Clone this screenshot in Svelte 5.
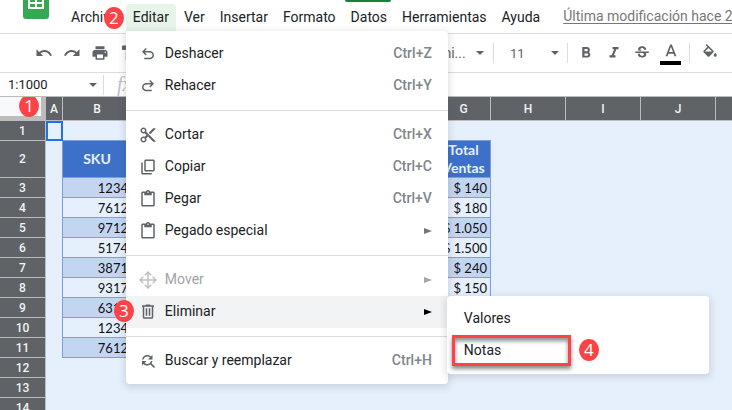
<script lang="ts">
	type MenuEntry = {
		label: string;
		icon: string;
		keys?: string;
		submenu?: boolean;
		disabled?: boolean;
		open?: boolean;
	};

	const menus = ["Archivo", "Editar", "Ver", "Insertar", "Formato", "Datos", "Herramientas", "Ayuda"];

	const groups: MenuEntry[][] = [
		[
			{ label: "Deshacer", icon: "back", keys: "Ctrl+Z" },
			{ label: "Rehacer", icon: "forward", keys: "Ctrl+Y" },
		],
		[
			{ label: "Cortar", icon: "cut", keys: "Ctrl+X" },
			{ label: "Copiar", icon: "copy", keys: "Ctrl+C" },
			{ label: "Pegar", icon: "paste", keys: "Ctrl+V" },
			{ label: "Pegado especial", icon: "paste", submenu: true },
		],
		[
			{ label: "Mover", icon: "move", submenu: true, disabled: true },
			{ label: "Eliminar", icon: "trash", submenu: true, open: true },
		],
		[{ label: "Buscar y reemplazar", icon: "replace", keys: "Ctrl+H" }],
	];

	const columns = ["A", "B", "C", "D", "E", "F", "G", "H", "I", "J", "K"];

	const sales = [
		["1234", "$ 140"],
		["7612", "$ 180"],
		["9712", "$ 1.050"],
		["5174", "$ 1.500"],
		["3871", "$ 240"],
		["9317", "$ 150"],
		["6312", "$ 180"],
		["1234", "$ 140"],
		["7612", "$ 180"],
	];

	// rows 1 to 14, sales start at row 3
	const rows = Array.from({ length: 14 }, (_, i) => i + 1);

	function cell(row: number, col: string) {
		if (row === 2) return { B: "SKU", G: "Total Ventas" }[col] ?? "";
		const sale = sales[row - 3];
		if (!sale) return "";
		return { B: sale[0], G: sale[1] }[col] ?? "";
	}

	function in_table(col: string) {
		return col >= "B" && col <= "G";
	}

	const paths: Record<string, string> = {
		undo: "M12.5 8c-2.65 0-5.05.99-6.9 2.6L2 7v9h9l-3.62-3.62c1.39-1.16 3.16-1.88 5.12-1.88 3.54 0 6.55 2.31 7.6 5.5l2.37-.78C21.08 11.03 17.15 8 12.5 8z",
		redo: "M18.4 10.6C16.55 8.99 14.15 8 11.5 8c-4.65 0-8.58 3.03-9.96 7.22L3.9 16c1.05-3.19 4.05-5.5 7.6-5.5 1.95 0 3.73.72 5.12 1.88L13 16h9V7l-3.6 3.6z",
		print: "M19 8H5c-1.66 0-3 1.34-3 3v6h4v4h12v-4h4v-6c0-1.66-1.34-3-3-3zm-3 11H8v-5h8v5zm3-7c-.55 0-1-.45-1-1s.45-1 1-1 1 .45 1 1-.45 1-1 1zm-1-9H6v4h12V3z",
		paint: "M18 4V3c0-.55-.45-1-1-1H5c-.55 0-1 .45-1 1v4c0 .55.45 1 1 1h12c.55 0 1-.45 1-1V6h1v4H9v11c0 .55.45 1 1 1h2c.55 0 1-.45 1-1v-9h8V4h-3z",
		bold: "M15.6 10.79c.97-.67 1.65-1.77 1.65-2.79 0-2.26-1.75-4-4-4H7v14h7.04c2.09 0 3.71-1.7 3.71-3.79 0-1.52-.86-2.82-2.15-3.42zM10 6.5h3c.83 0 1.5.67 1.5 1.5s-.67 1.5-1.5 1.5h-3v-3zm3.5 9H10v-3h3.5c.83 0 1.5.67 1.5 1.5s-.67 1.5-1.5 1.5z",
		italic: "M10 4v3h2.21l-3.42 8H6v3h8v-3h-2.21l3.42-8H18V4z",
		strike: "M7.24 8.75c-.26-.48-.39-1.03-.39-1.67 0-.61.13-1.16.4-1.67.26-.5.63-.93 1.11-1.29.48-.35 1.05-.63 1.7-.83.66-.19 1.39-.29 2.18-.29.81 0 1.54.11 2.21.34.66.22 1.23.54 1.69.94.47.4.83.88 1.08 1.43s.38 1.15.38 1.81h-3.01c0-.31-.05-.59-.15-.85-.09-.27-.24-.49-.44-.68-.2-.19-.45-.33-.75-.44-.3-.1-.66-.16-1.06-.16-.39 0-.74.04-1.03.13s-.53.21-.72.36c-.19.16-.34.34-.44.55-.1.21-.15.43-.15.66 0 .48.25.88.74 1.21.38.25.77.48 1.41.7H7.39c-.05-.08-.11-.17-.15-.25zM21 12v-2H3v2h9.62c.18.07.4.14.55.2.37.17.66.34.87.51s.35.36.43.57c.07.2.11.43.11.69 0 .23-.05.45-.14.66-.09.2-.23.38-.42.53-.19.15-.42.26-.71.35-.29.08-.63.13-1.01.13-.43 0-.83-.04-1.18-.13s-.66-.23-.91-.42c-.25-.19-.45-.44-.59-.75s-.25-.76-.25-1.21H6.4c0 .55.08 1.13.24 1.58s.37.85.65 1.21c.28.35.6.66.98.92.37.26.78.48 1.22.65.44.17.9.3 1.38.39.48.08.96.13 1.44.13.8 0 1.53-.09 2.18-.28s1.21-.45 1.67-.79c.46-.34.82-.77 1.07-1.27s.38-1.07.38-1.71c0-.6-.1-1.14-.31-1.61-.05-.11-.11-.23-.17-.33H21V12z",
		color: "M11 3L5.500 17h2.250l1.120-3h6.250l1.120 3h2.250L13 3h-2zm-1.380 9L12 5.670 14.380 12H9.620z",
		fill: "M16.56 8.94L7.62 0 6.21 1.41l2.38 2.38-5.15 5.15c-.59.59-.59 1.54 0 2.12l5.5 5.5c.29.29.68.44 1.06.44s.77-.15 1.06-.44l5.5-5.5c.59-.58.59-1.53 0-2.12zM5.21 10L10 5.21 14.79 10H5.21zM19 11.5s-2 2.17-2 3.5c0 1.1.9 2 2 2s2-.9 2-2c0-1.33-2-3.5-2-3.5z",
		back: "M7 19v-2h7.1c1.05 0 1.96-.33 2.73-1s1.17-1.5 1.17-2.5-.39-1.83-1.17-2.5S15.15 10 14.1 10H7.8l2.6 2.6L9 14 4 9l5-5 1.4 1.4L7.8 8h6.3c1.62 0 3 .53 4.16 1.58S20 11.93 20 13.5s-.58 2.9-1.74 3.95S15.72 19 14.1 19H7z",
		forward: "M17 19v-2H9.9c-1.05 0-1.96-.33-2.73-1S6 14.5 6 13.5s.39-1.83 1.17-2.5S8.85 10 9.9 10h6.3l-2.6 2.6L15 14l5-5-5-5-1.4 1.4L16.2 8H9.9c-1.62 0-3 .53-4.16 1.58S4 11.93 4 13.5s.58 2.9 1.74 3.95S8.28 19 9.9 19H17z",
		cut: "M9.64 7.64c.23-.5.36-1.05.36-1.64 0-2.21-1.79-4-4-4S2 3.79 2 6s1.79 4 4 4c.59 0 1.14-.13 1.64-.36L10 12l-2.36 2.36C7.14 14.13 6.59 14 6 14c-2.21 0-4 1.79-4 4s1.79 4 4 4 4-1.79 4-4c0-.59-.13-1.14-.36-1.64L12 14l7 7h3v-1L9.64 7.64zM6 8c-1.1 0-2-.89-2-2s.9-2 2-2 2 .89 2 2-.9 2-2 2zm0 12c-1.1 0-2-.89-2-2s.9-2 2-2 2 .89 2 2-.9 2-2 2zm6-7.5c-.28 0-.5-.22-.5-.5s.22-.5.5-.5.5.22.5.5-.22.5-.5.5zM19 3l-6 6 2 2 7-7V3z",
		copy: "M9 2h10c1.1 0 2 .9 2 2v12c0 1.100-.9 2-2 2H9c-1.100 0-2-.9-2-2V4c0-1.100.9-2 2-2zm0 2v12h10V4H9zM3 6h2v14h12v2H5c-1.100 0-2-.9-2-2V6z",
		paste: "M19 2h-4.18C14.4.84 13.3 0 12 0c-1.3 0-2.4.84-2.82 2H5c-1.1 0-2 .9-2 2v16c0 1.1.9 2 2 2h14c1.1 0 2-.9 2-2V4c0-1.1-.9-2-2-2zm-7 0c.55 0 1 .45 1 1s-.45 1-1 1-1-.45-1-1 .45-1 1-1zm7 18H5V4h2v3h10V4h2v16z",
		move: "M12 0l5 5-1.4 1.4L13 3.8V11h7.2l-2.6-2.6L19 7l5 5-5 5-1.4-1.4 2.6-2.6H13v7.2l2.6-2.6L17 19l-5 5-5-5 1.4-1.4 2.6 2.6V13H3.8l2.6 2.6L5 17l-5-5 5-5 1.4 1.4L3.8 11H11V3.8L8.4 6.4 7 5l5-5z",
		trash: "M9 2h6v1h5v2h-1v14c0 1.1-.9 2-2 2H7c-1.1 0-2-.9-2-2V5H4V3h5V2zM7 5v14h10V5H7zm2 2h2v10H9V7zm4 0h2v10h-2V7z",
		replace: "M11 6c1.38 0 2.63.56 3.54 1.46L12 10h6V4l-2.05 2.05C14.68 4.78 12.93 4 11 4c-3.53 0-6.43 2.61-6.92 6H6.1c.46-2.28 2.48-4 4.9-4zm5.64 9.14c.66-.9 1.12-1.97 1.28-3.14H15.9c-.46 2.28-2.48 4-4.9 4-1.38 0-2.63-.56-3.54-1.46L10 12H4v6l2.05-2.05C7.32 17.22 9.07 18 11 18c1.55 0 2.98-.51 4.14-1.36L20 21.49 21.49 20l-4.85-4.86z",
	};
</script>

{#snippet icon(name: string)}
	<svg class="icon" viewBox="0 0 24 24" aria-hidden="true"><path d={paths[name]} fill-rule="evenodd" /></svg>
{/snippet}

{#snippet caret()}
	<svg class="caret" viewBox="0 0 8 4" aria-hidden="true"><path d="M0 0h8L4 4z" /></svg>
{/snippet}

<div class="page">
	<header class="menubar">
		<svg class="logo" viewBox="0 0 26 36" aria-hidden="true">
			<rect width="26" height="36" rx="3" fill="#34a853" />
			<path d="M5 14h16v12H5zM7 16v3h5v-3zM14 16v3h5v-3zM7 21v3h5v-3zM14 21v3h5v-3z" fill="#fff" fill-rule="evenodd" />
		</svg>
		<nav class="menus">
			{#each menus as name}
				<div class="menu-slot">
					<button class="menu-name" class:active={name === "Editar"}>{name}</button>
					{#if name === "Editar"}
						<div class="menu" role="menu">
							{#each groups as group, g}
								{#if g > 0}<hr />{/if}
								{#each group as item}
									<div class="item-slot">
										<button class="item" class:open={item.open} role="menuitem" disabled={item.disabled}>
											{@render icon(item.icon)}
											<span class="label">{item.label}</span>
											{#if item.keys}<span class="keys">{item.keys}</span>{/if}
											{#if item.submenu}
												<svg class="more" viewBox="0 0 8 8" aria-hidden="true"><path d="M0 1L8 4L0 7z" /></svg>
											{/if}
										</button>
										{#if item.open}
											<div class="menu submenu" role="menu">
												<button class="item" role="menuitem"><span class="label">Valores</span></button>
												<button class="item" role="menuitem"><span class="label">Notas</span></button>
												<span class="frame"></span>
												<span class="badge four">4</span>
											</div>
											<span class="badge three">3</span>
										{/if}
									</div>
								{/each}
							{/each}
						</div>
						<span class="badge two">2</span>
					{/if}
				</div>
			{/each}
		</nav>
		<a class="modified" href="#historial">Última modificación hace 2</a>
		<span class="tab"></span>
	</header>

	<div class="toolbar">
		<button class="tool" aria-label="Deshacer">{@render icon("undo")}</button>
		<button class="tool" aria-label="Rehacer">{@render icon("redo")}</button>
		<button class="tool" aria-label="Imprimir">{@render icon("print")}</button>
		<button class="tool" aria-label="Copiar formato">{@render icon("paint")}</button>
		<div class="picker font">
			<select aria-label="Fuente"><option>Predetermi...</option></select>
			{@render caret()}
		</div>
		<span class="rule"></span>
		<div class="picker size">
			<select aria-label="Tamaño de fuente"><option>11</option></select>
			{@render caret()}
		</div>
		<span class="rule"></span>
		<div class="styles">
			<button class="tool" aria-label="Negrita">{@render icon("bold")}</button>
			<button class="tool" aria-label="Cursiva">{@render icon("italic")}</button>
			<button class="tool" aria-label="Tachado">{@render icon("strike")}</button>
			<button class="tool color" aria-label="Color del texto">{@render icon("color")}</button>
		</div>
		<span class="rule"></span>
		<button class="tool fill" aria-label="Color de relleno">{@render icon("fill")}</button>
	</div>

	<div class="formula">
		<input aria-label="Cuadro de nombres" value="1:1000" />
		{@render caret()}
		<span class="rule"></span>
		<span class="fx">fx</span>
	</div>

	<main class="sheet">
		<table>
			<colgroup>
				<col class="w-head" />
				{#each columns as col}
					<col class="w-{col.toLowerCase()}" />
				{/each}
			</colgroup>
			<thead>
				<tr>
					<td class="corner"></td>
					{#each columns as col}
						<th scope="col">{col}</th>
					{/each}
				</tr>
			</thead>
			<tbody>
				{#each rows as row}
					<tr class:tall={row === 2}>
						<th scope="row">{row}</th>
						{#each columns as col}
							<td
								class:selected={row === 1 && col === "A"}
								class:edge={col === "A" && row > 1 && row < 12}
								class:top={row === 1 && in_table(col)}
								class:title={row === 2 && in_table(col)}
								class:data={row > 2 && row < 12 && in_table(col)}
								class:band={row % 2 === 1}>{cell(row, col)}</td
							>
						{/each}
					</tr>
				{/each}
			</tbody>
		</table>
		<span class="badge one">1</span>
	</main>
</div>

<style>
	:global(body) {
		margin: 0;
	}

	.page {
		display: flex;
		flex-direction: column;
		height: 100vh;
		overflow: hidden;
		background: #fff;
		color: #202124;
		font-family: Roboto, Arial, sans-serif;
		font-size: 14px;
	}

	button,
	input,
	select {
		margin: 0;
		padding: 0;
		border: 0;
		background: none;
		color: inherit;
		font: inherit;
		appearance: none;
	}

	.icon {
		display: block;
		flex: none;
		width: 18px;
		height: 18px;
		fill: #5f6368;
	}

	.menubar {
		position: relative;
		display: flex;
		flex: none;
		align-items: flex-start;
		height: 33px;
		padding-left: 23px;
		border-bottom: 1px solid #dadce0;
		white-space: nowrap;
	}

	.logo {
		flex: none;
		align-self: flex-end;
		width: 26px;
		height: 36px;
		margin-bottom: 14px;
	}

	.menus {
		display: flex;
		gap: 1px;
		padding: 4px 0 0 15px;
	}

	.menu-slot,
	.item-slot {
		position: relative;
	}

	.menu-name {
		height: 27px;
		padding: 0 7px 2px;
		border-radius: 4px 4px 0 0;
	}

	.menu-name.active {
		background: #e6f4ea;
	}

	.modified {
		margin-left: 16px;
		color: #777;
		line-height: 33px;
		text-underline-offset: 2px;
	}

	.tab {
		position: absolute;
		top: 0;
		left: 345px;
		width: 46px;
		height: 2px;
		border-radius: 0 0 4px 4px;
		background: #188038;
	}

	.menu {
		position: absolute;
		z-index: 2;
		top: 100%;
		left: 0;
		box-sizing: border-box;
		width: 322px;
		padding: 7px 0;
		border-radius: 0 4px 4px 4px;
		background: #fff;
		box-shadow: 0 2px 6px 2px rgba(60, 64, 67, 0.15);
	}

	.submenu {
		top: 0;
		left: 321px;
		width: 262px;
		border-radius: 4px;
	}

	hr {
		height: 1px;
		margin: 8px 0;
		border: 0;
		background: #dadce0;
	}

	.item {
		display: flex;
		align-items: center;
		width: 100%;
		height: 32px;
		padding: 0 16px 0 13px;
		text-align: left;
	}

	.submenu .item {
		padding-left: 9px;
	}

	.item.open {
		background: #f1f3f4;
	}

	.item:disabled {
		color: #a0a3a7;
	}

	.item:disabled .icon {
		fill: #bdc1c6;
	}

	.label,
	.keys {
		padding-bottom: 2px;
	}

	.label {
		flex: 1;
		margin-left: 8px;
	}

	.keys {
		color: #80868b;
		font-weight: 500;
	}

	.more {
		width: 8px;
		height: 8px;
		fill: #777;
	}

	.item:disabled .more {
		fill: #a0a3a7;
	}

	.open .more {
		fill: #000;
	}

	.toolbar {
		display: flex;
		flex: none;
		align-items: center;
		height: 38px;
		padding-left: 30px;
		border-bottom: 1px solid #dadce0;
		color: #5f6368;
	}

	.tool {
		display: flex;
		flex: none;
		align-items: center;
		justify-content: center;
		width: 28px;
		height: 28px;
	}

	.picker {
		display: flex;
		flex: none;
		align-items: center;
		justify-content: space-between;
	}

	.font {
		width: 98px;
		margin: 0 9px 0 244px;
	}

	.size {
		width: 49px;
		margin: 0 8px 0 16px;
		font-size: 13px;
	}

	.caret {
		flex: none;
		width: 8px;
		height: 4px;
		fill: #5f6368;
	}

	.rule {
		flex: none;
		width: 1px;
		height: 20px;
		background: #dadce0;
	}

	.styles {
		display: flex;
		padding: 0 4px;
	}

	.color {
		width: 21px;
		height: 22px;
		margin: 4px 4px 0 4px;
		border-bottom: 4px solid #000;
	}

	.color .icon,
	.color :global(.icon) {
		width: 20px;
		height: 20px;
	}

	.fill {
		margin-left: 6px;
	}

	.formula {
		display: flex;
		flex: none;
		align-items: center;
		height: 23px;
		padding-left: 8px;
	}

	.formula input {
		width: 81px;
		font-size: 13px;
	}

	.formula .rule {
		margin: 0 13px 0 6px;
	}

	.fx {
		color: #bdc1c6;
		font: italic 20px "Liberation Serif", serif;
	}

	.sheet {
		position: relative;
		flex: 1;
		overflow: hidden;
		border-top: 1px solid #bcbcbc;
		background: #e6f0fd;
	}

	table {
		width: 791px;
		border-spacing: 0;
		table-layout: fixed;
	}

	.w-head {
		width: 46px;
	}

	.w-a {
		width: 17px;
	}

	.w-b {
		width: 69px;
	}

	.w-c,
	.w-d,
	.w-e {
		width: 76px;
	}

	.w-f {
		width: 77px;
	}

	.w-g {
		width: 54px;
	}

	th,
	td {
		box-sizing: border-box;
		height: 20px;
		padding: 0;
		line-height: 16px;
	}

	th {
		border-right: 1px solid #bcbcbc;
		border-bottom: 1px solid #bcbcbc;
		background: #5f6368;
		color: #f1f3f4;
		font-size: 12px;
		font-weight: 500;
	}

	thead th,
	.corner {
		height: 24px;
	}

	.corner {
		border-right: 5px solid #bcbcbc;
		border-bottom: 5px solid #bcbcbc;
		background: #f8f9fa;
	}

	.tall th,
	.tall td {
		height: 37px;
	}

	.edge {
		border-right: 1px solid #7b9fdc;
	}

	.top {
		border-bottom: 1px solid #7b9fdc;
	}

	.title {
		border-right: 1px solid #7b9fdc;
		border-bottom: 1px solid #7b9fdc;
		background: #3d71c9;
		color: #e8f0fe;
		font-family: Lato, sans-serif;
		font-size: 14px;
		font-weight: 700;
		line-height: 18px;
		text-align: center;
	}

	.data {
		padding-right: 3px;
		border-right: 1px solid #7b9fdc;
		border-bottom: 1px solid #7b9fdc;
		color: #111;
		font-family: Lato, sans-serif;
		font-size: 13px;
		text-align: right;
		white-space: nowrap;
	}

	.data.band {
		background: #c4d5f2;
	}

	.selected {
		outline: 2px solid #1a73e8;
		outline-offset: -2px;
	}

	.badge {
		position: absolute;
		z-index: 3;
		width: 20px;
		height: 22px;
		border-radius: 50%;
		background: #fd4345;
		color: #fff;
		font: 17px/22px "Open Sans", sans-serif;
		text-align: center;
	}

	.one {
		top: -2px;
		left: 19px;
	}

	.two {
		top: 3px;
		left: -22px;
	}

	.three {
		top: 4px;
		left: -12px;
	}

	.four {
		top: 43px;
		left: 132px;
	}

	.frame {
		position: absolute;
		top: 39px;
		left: 5px;
		box-sizing: border-box;
		width: 119px;
		height: 31px;
		border: 3px solid #fd4345;
		box-shadow:
			0 3px 4px rgba(0, 0, 0, 0.45),
			inset 0 3px 4px rgba(0, 0, 0, 0.45);
	}
</style>
